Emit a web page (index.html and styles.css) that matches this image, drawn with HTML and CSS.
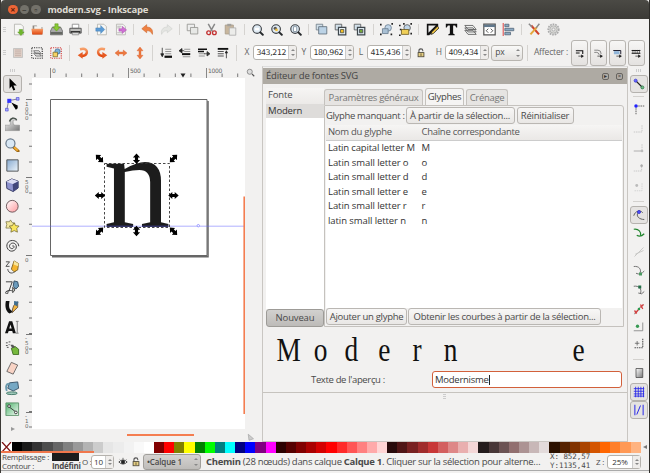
FILE: index.html
```html
<!DOCTYPE html>
<html lang="fr">
<head>
<meta charset="utf-8">
<title>modern.svg - Inkscape</title>
<link rel="stylesheet" href="styles.css">
</head>
<body>
<svg class="defs" width="0" height="0">
  <defs>
    <linearGradient id="blue" x1="0" y1="0" x2="1" y2="1"><stop offset="0" stop-color="#86a9cf"/><stop offset="1" stop-color="#eef5fb"/></linearGradient>
    <linearGradient id="orange" x1="0" y1="0" x2="0" y2="1"><stop offset="0" stop-color="#f7a06a"/><stop offset="1" stop-color="#e2470f"/></linearGradient>
    <linearGradient id="pink" x1="0" y1="0" x2="1" y2="1"><stop offset="0" stop-color="#fff"/><stop offset="1" stop-color="#ff9a9f"/></linearGradient>
    <linearGradient id="green" x1="0" y1="0" x2="1" y2="1"><stop offset="0" stop-color="#4fb36c"/><stop offset="1" stop-color="#f2faf4"/></linearGradient>
    <linearGradient id="grey" x1="0" y1="0" x2="1" y2="1"><stop offset="0" stop-color="#fff"/><stop offset="1" stop-color="#777"/></linearGradient>
    <symbol id="lens" viewBox="0 0 16 16"><circle cx="7.500" cy="7.500" r="5.300" fill="#dfeaf3" stroke="#3c4045" stroke-width="1.400"/><path d="M11.500 11.500l3 3" stroke="#25282b" stroke-width="2.400" stroke-linecap="round"/></symbol>
    <symbol id="rot" viewBox="0 0 16 16"><path d="M4 3c7-2 10 1 9 5-1 3-3 4-7 4" fill="none" stroke="url(#orange)" stroke-width="3.200"/><path d="M7.500 6.500v9L1 11z" fill="#e65a22"/></symbol>
    <symbol id="harrow" viewBox="0 0 16 16"><path d="M0 8l5-4v2.700h6V4l5 4-5 4V9.300H5V12z" fill="#ec7a42" stroke="#d9571f" stroke-width=".5"/></symbol>
    <symbol id="lock" viewBox="0 0 12 12"><path d="M3.500 6V3.500a2.300 2.300 0 0 1 4.700-.2V4" fill="none" stroke="#555" stroke-width="1.300"/><rect x="2.500" y="5.500" width="7" height="5" fill="#e5cf84" stroke="#4b4638"/><path d="M6 6.500v3" stroke="#54472a"/></symbol>
    <symbol id="resize" viewBox="-6 -6 12 12"><path d="M-5.200 0l4-3.600v2h2.400v-2l4 3.600-4 3.600v-2h-2.400v2z" fill="#000"/></symbol>
    <symbol id="sheet" viewBox="0 0 16 16"><path d="M3 1.500h8l3 3v10H3z" fill="#f7f7f5" stroke="#b2b1ad"/></symbol>
  </defs>
</svg>

<div class="window">
  <header class="titlebar">
    <span class="wbtn close">×</span><span class="wbtn">–</span><span class="wbtn">▫</span>
    <h1>modern.svg - Inkscape</h1>
  </header>

  <div class="commands">
    <i class="grip"></i>
    <svg viewBox="0 0 16 16"><use href="#sheet"/><path d="M9 8h4v3h2l-4 4.500L7 11h2z" fill="#6fb52c" stroke="#4b8d16" stroke-width=".5"/></svg>
    <svg viewBox="0 0 16 16"><path d="M2 3h5l1 2h6v9H2z" fill="#8d8780"/><path d="M4 4h9v6H4z" fill="#f4f4f2"/><path d="M.5 7h14.500l-1 7H1.500z" fill="url(#orange)"/></svg>
    <svg viewBox="0 0 16 16"><path d="M3 5h10l2.500 5v4.500H.5V10z" fill="#aaa" stroke="#686868"/><path d="M1 11h14v3H1z" fill="#656762"/><path d="M6 1h4v4h2.500L8 10 3.500 5H6z" fill="#8aca35" stroke="#568b16" stroke-width=".6"/></svg>
    <svg viewBox="0 0 16 16"><path d="M4 1.500h8v5H4z" fill="#fff" stroke="#888"/><path d="M1 6.500h14v6H1z" fill="#bdbdbb" stroke="#444"/><path d="M2 10h12v2H2z" fill="#222"/><path d="M4 12h8v2.500H4z" fill="#eee" stroke="#888"/></svg>
    <i class="sep"></i>
    <svg viewBox="0 0 16 16"><use href="#sheet"/><path d="M1 6h6V3l5 5-5 5v-3H1z" fill="#5b9bd5" stroke="#3c76ae" stroke-width=".5"/></svg>
    <svg viewBox="0 0 16 16"><use href="#sheet"/><path d="M4 4h5M4 6h4M4 12h6" stroke="#aaa"/><path d="M6 7h4V4l5.500 4.500L10 13v-3H6z" fill="#cf6fd4" stroke="#9b459f" stroke-width=".5"/></svg>
    <i class="sep"></i>
    <svg viewBox="0 0 16 16"><path d="M1 7l6-5v3c6 0 8 4 7 9-2-4-4-4.500-7-4.500V12z" fill="#ef8142" stroke="#c9642b" stroke-width=".7"/></svg>
    <svg viewBox="0 0 16 16"><path d="M15 7L9 2v3C3 5 1 9 2 14c2-4 4-4.500 7-4.500V12z" fill="#e4e5e2" stroke="#ccceca" stroke-width=".7"/></svg>
    <i class="sep"></i>
    <svg viewBox="0 0 16 16"><path d="M1.500 1.500h9v8h-9z" fill="#eee" stroke="#92928f"/><path d="M5.500 5.500h9v8h-9z" fill="#e7e8e6" stroke="#92928f"/></svg>
    <svg viewBox="0 0 16 16"><path d="M4 1l5 9M12 1L7 10" stroke="#888" stroke-width="1.800"/><circle cx="4.500" cy="12" r="2.300" fill="none" stroke="#c33232" stroke-width="1.700"/><circle cx="11.500" cy="12" r="2.300" fill="none" stroke="#c33232" stroke-width="1.700"/></svg>
    <svg viewBox="0 0 16 16"><path d="M1.500 2.500h10v11h-10z" fill="#c8b69d" stroke="#a89c8a"/><path d="M4 1h5v3H4z" fill="#a3a19c"/><path d="M6.500 6h8v9h-8z" fill="#ececea" stroke="#aaa"/></svg>
    <i class="sep"></i>
    <svg viewBox="0 0 16 16"><use href="#lens"/><path d="M5 7.500h5" stroke="#fff" stroke-width="3"/></svg>
    <svg viewBox="0 0 16 16"><use href="#lens"/><circle cx="6.500" cy="6.500" r="2" fill="#555"/><path d="M6.500 7h3v3h-3z" fill="#f4c23c"/></svg>
    <svg viewBox="0 0 16 16"><use href="#lens"/><path d="M5.500 4.500h4v6h-4z" fill="#fff" stroke="#7a8b9a"/></svg>
    <i class="sep"></i>
    <svg viewBox="0 0 16 16"><path d="M1.500 1.500h8v7h-8z" fill="#d2e0ea" stroke="#6f7c86"/><path d="M4.500 4.500h10v9h-10z" fill="#bcd3e6" stroke="#5c6b78"/></svg>
    <svg viewBox="0 0 16 16"><path d="M1.500 1.500h8v7h-8z" fill="#d2e0ea" stroke="#555"/><path d="M5.500 5.500h9v9h-9z" fill="#e8f0f5" stroke="#3e464c" stroke-width="1.500"/><path d="M8 8h4v4H8z" fill="#f5c025" stroke="#554"/></svg>
    <svg viewBox="0 0 16 16"><path d="M1.500 1.500h8v7h-8z" fill="#d2e0ea" stroke="#555"/><path d="M5.500 5.500h9v9h-9z" fill="#dce9ef" stroke="#3e464c" stroke-width="1.500"/><path d="M8 8h4v4H8z" fill="#74a838" stroke="#445"/></svg>
    <i class="sep"></i>
    <svg viewBox="0 0 16 16"><circle cx="10" cy="6" r="4" fill="#c0d5e8" stroke="#697c8f"/><path d="M3 7h7v6H3z" fill="#a9c0d4" stroke="#697c8f"/><path d="M0 1h2v2H0zM14 0h2v2h-2zM0 13h2v2H0zM13 13h2v2h-2z" fill="#222"/></svg>
    <svg viewBox="0 0 16 16"><circle cx="10" cy="6" r="4" fill="#c0d5e8" stroke="#555"/><path d="M3 8h9v6H3z" fill="#f0cf57" stroke="#6b5920"/><path d="M0 2h2v2H0zM5 0h2v2H5zM14 0h2v2h-2zM0 14h2v2H0zM14 12h2v2h-2zM1 7h2v2H1z" fill="#222"/></svg>
    <i class="sep"></i>
    <svg viewBox="0 0 16 16"><path d="M1 1h14v4L4 15H1z" fill="#111"/><path d="M3 3h9L3 12z" fill="#eee"/><path d="M14 4l2 2-7 7-3 1 1-3z" fill="#efc544" stroke="#222"/></svg>
    <svg viewBox="0 0 16 16"><path d="M1 1h14v4.500h-1.200L12.500 3H10v10l2 1v1H4v-1l2-1V3H3.500L2.200 5.500H1z" fill="#111"/></svg>
    <svg viewBox="0 0 16 16"><path d="M1 9h10l4 5H5zM1 6h10l4 5H5zM1 3h10l4 5H5z" fill="#f2f3f2" stroke="#555"/></svg>
    <svg viewBox="0 0 16 16"><path d="M1 1.500h14v13H1z" fill="#fff" stroke="#555" stroke-width="1.500"/><path d="M1 2h14v3H1z" fill="#61788c"/><path d="M6.500 7L4 9.500 6.500 12M9.500 7L12 9.500 9.500 12" fill="none" stroke="#333"/></svg>
    <svg viewBox="0 0 16 16"><path d="M1.500 0v16" stroke="#e15959" stroke-width="1.400"/><path d="M3.500 1.500h5v3h-5zM3.500 6.500h11v3h-11zM3.500 11.500h7v3h-7z" fill="#8ba9c2" stroke="#55687a"/></svg>
    <i class="sep"></i>
    <svg viewBox="0 0 16 16"><path d="M4 3l9.500 11" stroke="#cf432b" stroke-width="2.600"/><path d="M11 5L3 14" stroke="#e4a73c" stroke-width="2.400"/><path d="M1 1l4 4M10 6l4-5" stroke="#888" stroke-width="1.800"/></svg>
    <svg viewBox="0 0 16 16"><circle cx="8" cy="8" r="6.500" fill="#ddd" stroke="#aaa" stroke-width="2" stroke-dasharray="2 1.200"/><circle cx="8" cy="8" r="4.500" fill="#d8d8d6" stroke="#b0b0ae"/><circle cx="8" cy="8" r="1.800" fill="#f2f1f0" stroke="#aaa"/></svg>
  </div>

  <div class="options">
    <i class="grip"></i>
    <svg viewBox="0 0 16 16"><path d="M2 2h12v12H2z" fill="#dfd0c8" stroke="#bbb"/><path d="M4 4h8M4 6.500h8M4 9h8M4 11.500h8" stroke="#c0aaa0"/></svg>
    <svg viewBox="0 0 16 16"><path d="M1 1h14v14H1z" fill="none" stroke="#333" stroke-width="1.500" stroke-dasharray="1.500 1.500"/><path d="M3.500 8h7l3 4h-7zM3.500 5h7l3 4h-7z" fill="#eee" stroke="#555"/></svg>
    <svg viewBox="0 0 16 16"><path d="M1 1h14v14H1z" fill="none" stroke="#d23b3b" stroke-width="1.500" stroke-dasharray="1.500 1.500"/><circle cx="10" cy="6" r="3.500" fill="#7cb3dc" stroke="#3b6b96"/><path d="M4 7h6v6H4z" fill="#f6d264" stroke="#7c6b2f"/></svg>
    <i class="sep"></i>
    <svg viewBox="0 0 16 16"><use href="#rot"/></svg>
    <svg viewBox="0 0 16 16"><use href="#rot" transform="matrix(-1 0 0 1 16 0)"/></svg>
    <svg viewBox="0 0 16 16"><use href="#harrow"/></svg>
    <svg viewBox="0 0 16 16"><use href="#harrow" transform="rotate(90 8 8)"/></svg>
    <i class="sep"></i>
    <svg viewBox="0 0 16 16"><path d="M3 1v10M1 9h4l-2 4z" stroke="#222" fill="#222"/><path d="M7 3h8M7 6h8M7 9h8" stroke="#777"/><path d="M6 13h10" stroke="#111" stroke-width="3"/></svg>
    <svg viewBox="0 0 16 16"><path d="M7 3h8M7 6h8M5 13h10" stroke="#777"/><path d="M4 9.500h11" stroke="#111" stroke-width="2.600"/><path d="M1 5h6M4 2L0 5l4 3z" stroke="#222" fill="#222"/></svg>
    <svg viewBox="0 0 16 16"><path d="M1 9h8M1 12h8" stroke="#777"/><path d="M0 3h12M0 6h8" stroke="#111" stroke-width="2.200"/><path d="M8 9h5M12 6l4 3-4 3z" stroke="#333" fill="#333"/></svg>
    <svg viewBox="0 0 16 16"><path d="M1 2.500h14" stroke="#111" stroke-width="2.500"/><path d="M1 6h8M1 9h8M1 12h8" stroke="#555" stroke-width="1.500"/><path d="M12.500 15V7M11 8h3l-1.500-3z" stroke="#222" fill="#222"/></svg>
    <i class="sep"></i>
    <label class="axis">X</label><span class="spin"><b>343,212</b><i></i></span>
    <label class="axis">Y</label><span class="spin"><b>180,962</b><i></i></span>
    <label class="axis">L</label><span class="spin"><b>415,436</b><i></i></span>
    <svg class="lock" viewBox="0 0 12 12"><use href="#lock"/></svg>
    <label class="axis">H</label><span class="spin"><b>409,434</b><i></i></span>
    <span class="unit">px<i></i></span>
    <i class="sep"></i>
    <label class="affect">Affecter :</label>
    <span class="toggle"><svg viewBox="0 0 16 16"><path d="M3 4.500h11v5M3 8h6" fill="none" stroke="#111" stroke-width="1.700"/><path d="M7 13h5M12 11l3 2-3 2z" fill="#111" stroke="#111"/></svg></span>
    <span class="toggle"><svg viewBox="0 0 16 16"><path d="M2 3.500h6q5 0 5 6M2 7h4q3 0 4 4" fill="none" stroke="#666" stroke-width="1.200"/><path d="M7 13h5M12 11l3 2-3 2z" fill="#111" stroke="#111"/></svg></span>
    <span class="toggle"><svg viewBox="0 0 16 16"><path d="M3 5h9v5H3z" fill="#8fb4d8"/><path d="M2 4h12v6" fill="none" stroke="#223" stroke-width="1.600"/><path d="M7 13h5M12 11l3 2-3 2z" fill="#111" stroke="#111"/></svg></span>
    <span class="toggle"><svg viewBox="0 0 16 16"><path d="M1 4h14M1 8.500h14" stroke="#111" stroke-width="1.700"/><path d="M3 3v6M6.500 3v6M10 3v6M13.500 3v6" stroke="#333"/><path d="M7 13h5M12 11l3 2-3 2z" fill="#111" stroke="#111"/></svg></span>
  </div>

  <main class="work">
    <nav class="tools">
      <i class="grip wide"></i>
      <span class="tool on"><svg viewBox="0 0 16 16"><path d="M5 1.500l8 8H9.300l2 4.500-2 1-2.200-4.700L5 13z" fill="#000"/></svg></span>
      <span class="tool"><svg viewBox="0 0 16 16"><path d="M2 14L4 4l11-2" fill="none" stroke="#557" stroke-width=".8"/><path d="M2.500 2h4.500v4.500H2.500z" fill="#33f"/><path d="M.5 12.500h3v3h-3zM12.500 .5h3v3h-3z" fill="#aaf" stroke="#33c" stroke-width=".6"/><path d="M7 6l7 3.500v3L12 14z" fill="#000"/></svg></span>
      <span class="tool"><svg viewBox="0 0 16 16"><path d="M0 9h5c2-1 0-4 1-6 2-3 6-2 7 1-2-1-4-1-4 1s0 4 2 4h5v6H0z" fill="url(#grey)" stroke="#666" stroke-width=".4"/><path d="M5 5c1-4 5-5 8-2" fill="none" stroke="#455049" stroke-width="1.600"/></svg></span>
      <span class="tool"><svg viewBox="0 0 16 16"><path d="M9.500 10l5 4.500" stroke="#9c6715" stroke-width="3.200" stroke-linecap="round"/><path d="M10 10l4 4" stroke="#f6ae32" stroke-width="2"/><circle cx="6" cy="6" r="5" fill="#d9e8f5" stroke="#667789" stroke-width="1.300"/></svg></span>
      <span class="tool"><svg viewBox="0 0 16 16"><path d="M2 2h12.500v12.500H2z" fill="url(#blue)" stroke="#4b4d50"/></svg></span>
      <span class="tool"><svg viewBox="0 0 16 16"><path d="M1.500 4l6-3 7 2.500v7.500L9 15 2 11.500z" fill="#8f94cf" stroke="#30345f"/><path d="M8.500 6.500l6-3v7.500L9 15z" fill="#42477c"/><path d="M1.500 4l7 2.500 6-3-7-2.500z" fill="#dcdef4"/></svg></span>
      <span class="tool"><svg viewBox="0 0 16 16"><circle cx="8" cy="8" r="6.500" fill="url(#pink)" stroke="#665255"/></svg></span>
      <span class="tool"><svg viewBox="0 0 16 16"><path d="M6 1l2 3 3 1-2 3 0 3-4-1-4 0 1-4-1-3 4 0z" fill="#f2e8a0" stroke="#77703d" stroke-width=".8"/><path d="M10 4l1.700 3.300 3.800.5-2.500 2.700.7 4-3.500-1.700-3.700 1.700.7-4-2.500-2.700 3.500-.5z" fill="#f9e65d" stroke="#6d6431" stroke-width=".8"/></svg></span>
      <span class="tool"><svg viewBox="0 0 16 16"><path d="M8 8c1-1.500 2.500 0 1.700 1.500C8 12 4.500 10 5 7.500 5.800 3.700 11 3.500 12.300 7 13.700 12 8 15 4.500 12.500.5 9.500 1.500 3 6.500 1.800 11 .8 15 4 15.200 8" fill="none" stroke="#3d3d3d" stroke-width="1.100"/></svg></span>
      <span class="tool"><svg viewBox="0 0 16 16"><path d="M1 2h4L1 7h4M3 10c1 6 6 5 9 2" fill="none" stroke="#444"/><path d="M10 1l5 3-1 7-4 2-3-3z" fill="#f5b52f" stroke="#7e6427"/><path d="M10 1l5 3-.5 3-5-2z" fill="#f9e79a"/></svg></span>
      <span class="tool"><svg viewBox="0 0 16 16"><path d="M1 2h7L4 13M1 13c5-4 8 2 10-4" fill="none" stroke="#444" stroke-width="1.100"/><circle cx="2" cy="14" r="1.300" fill="#fff" stroke="#333"/><path d="M10 1l4 1 1 5-3 3-3-3z" fill="#6a9abb" stroke="#30495f"/><path d="M8.500 8l2.500 3-2.500 3z" fill="#d7d8cf" stroke="#444"/></svg></span>
      <span class="tool"><svg viewBox="0 0 16 16"><path d="M1 1h4c-1 6-1 9 4 12l-4 2C0 12 0 5 1 1z" fill="#111"/><path d="M14 2c-4 2-6 6-6 12l6-6z" fill="#f1b440" stroke="#654"/><path d="M10 1l5 1-2 5-3-2z" fill="#406f91"/></svg></span>
      <span class="tool"><svg viewBox="0 0 16 16"><path d="M4.500 1.500h3.500L12 14.500H8.700L8 12H4l-.8 2.500H0zM6 5l-1.300 4.500h2.700z" fill="#111" fill-rule="evenodd"/><path d="M12 1.500h3M12 14.500h3M13.500 2v12" stroke="#555" stroke-width=".8"/></svg></span>
      <span class="tool"><svg viewBox="0 0 16 16"><path d="M7 8l4-2 4 3v6H9z" fill="#76b83c" stroke="#3d6c20"/><path d="M6 4l3 0 2 3-3 1z" fill="#555"/><path d="M1 2h2M4 1h2M1 5h2M4 4h1M2 7h2" stroke="#444"/></svg></span>
      <span class="tool"><svg viewBox="0 0 16 16"><path d="M7 1.500l7 3-5 10-7-3z" fill="#f8d3c5" stroke="#555" stroke-width=".9"/></svg></span>
      <span class="tool"><svg viewBox="0 0 16 16"><path d="M5 2l9-1 1 7-6 3-6-3z" fill="#76a8c4" stroke="#355166"/><path d="M5 3C0 3 1 8 2 11" fill="none" stroke="#6b9aae" stroke-width="2"/><ellipse cx="7.500" cy="13.500" rx="6" ry="1.500" fill="#a1cabb" stroke="#3f7566"/></svg></span>
      <span class="tool"><svg viewBox="0 0 16 16"><path d="M1 1h14v14H1z" fill="url(#green)" stroke="#5d936b"/><path d="M4 5l8 6" stroke="#333"/><circle cx="4.500" cy="4.500" r="1.500" fill="#fff" stroke="#333"/><circle cx="12" cy="11.500" r="1.500" fill="#fff" stroke="#333"/></svg></span>
      <i class="more"></i>
    </nav>

    <section class="editor">
      <svg class="hruler" width="221" height="12" viewBox="24 66 221 12">
        <path d="M34.400 75.200H245" stroke="#777" stroke-width="3.600" stroke-dasharray="1 14.600"/>
        <path d="M50.500 68v10M128.500 68v10M206.500 68v10" stroke="#888"/>
        <path d="M180.500 73.500h5l-2.500 4z" fill="#222"/>
        <text x="52" y="72.600">0</text><text x="130" y="72.600">500</text><text x="208" y="72.600">1000</text>
      </svg>
      <svg class="vruler" width="8" height="351" viewBox="24 78 8 351">
        <path d="M30.500 83.400V428" stroke="#777" stroke-width="3" stroke-dasharray="1 14.600"/>
        <path d="M26 99.500h6M26 177.500h6M26 255.500h6M26 334.500h6M26 412.500h6" stroke="#777"/>
        <g><text x="25" y="106">1</text><text x="25" y="110.500">0</text><text x="25" y="115">0</text><text x="25" y="119.500">0</text>
        <text x="25" y="184">5</text><text x="25" y="188.500">0</text><text x="25" y="193">0</text><text x="25" y="262">0</text>
        <text x="25" y="340">-</text><text x="25" y="345">5</text><text x="25" y="349.500">0</text><text x="25" y="354">0</text>
        <text x="25" y="418">-</text><text x="25" y="423">1</text><text x="25" y="427.500">0</text></g>
      </svg>
      <svg class="canvas" width="213" height="351" viewBox="32 78 213 351">
        <path d="M52 256.700h156V101" fill="none" stroke="#666" stroke-width="1.500"/>
        <path d="M50.500 99.500h156.500v156h-156.500z" fill="#fff" stroke="#666"/>
        <text class="letter" x="103.500" y="227" textLength="67" lengthAdjust="spacingAndGlyphs">n</text>
        <path d="M32 226.200h213" stroke="#6464ff" stroke-opacity=".5"/>
        <circle cx="198.300" cy="225.700" r="1.200" fill="#fff" stroke="#8585ff" stroke-width=".8"/>
        <path d="M104.500 163.500h65v64h-65z" fill="none" stroke="#333" stroke-width=".9" stroke-dasharray="2.500 2"/>
        <g>
          <use href="#resize" x="93.500" y="152.500" width="12" height="12" transform="rotate(45 99.500 158.500)"/>
          <use href="#resize" x="130.500" y="152.800" width="12" height="12" transform="rotate(90 136.500 158.800)"/>
          <use href="#resize" x="167.500" y="152.500" width="12" height="12" transform="rotate(-45 173.500 158.500)"/>
          <use href="#resize" x="94" y="189.500" width="12" height="12"/>
          <use href="#resize" x="167.500" y="189.500" width="12" height="12"/>
          <use href="#resize" x="93.500" y="225.300" width="12" height="12" transform="rotate(-45 99.500 231.300)"/>
          <use href="#resize" x="130.500" y="225" width="12" height="12" transform="rotate(90 136.500 231)"/>
          <use href="#resize" x="167.500" y="225.300" width="12" height="12" transform="rotate(45 173.500 231.300)"/>
        </g>
        <path d="M244.300 196.500V414" stroke="#f47d50" stroke-width="1.800"/>
      </svg>
      <div class="vside">
        <svg viewBox="0 0 12 12"><circle cx="5" cy="5" r="3.400" fill="#ddd" stroke="#777"/><path d="M8 8l3 3" stroke="#555" stroke-width="1.500"/></svg>
        <svg viewBox="0 0 12 12"><path d="M3 3l7 6-6 2z" fill="#ccc" stroke="#aaa"/></svg>
      </div>
      <div class="hscroll"><i></i></div>
    </section>
    <div class="split"></div>

    <aside class="dock">
      <div class="dialog">
        <div class="dtitle"><h2>Éditeur de fontes SVG</h2><span>▸</span><span>×</span></div>
        <div class="fontpane">
          <div class="fonts">
            <div class="colhead">Fonte</div>
            <div class="picked">Modern</div>
            <div class="blank"></div>
            <span class="newbtn">Nouveau</span>
          </div>
          <div class="book">
            <div class="tabs"><span class="tab t1">Paramètres généraux</span><span class="tab t2 active">Glyphes</span><span class="tab t3">Crénage</span></div>
            <div class="page">
              <div class="missing"><label>Glyphe manquant :</label><span class="btn b1">À partir de la sélection...</span><span class="btn b2">Réinitialiser</span></div>
              <div class="glyphs">
                <div class="row head"><span>Nom du glyphe</span><span>Chaîne correspondante</span></div>
                <div class="row cap"><span>Latin capital letter M</span><span>M</span></div>
                <div class="row"><span>Latin small letter o</span><span>o</span></div>
                <div class="row"><span>Latin small letter d</span><span>d</span></div>
                <div class="row"><span>Latin small letter e</span><span>e</span></div>
                <div class="row"><span>Latin small letter r</span><span>r</span></div>
                <div class="row"><span>latin small letter n</span><span>n</span></div>
              </div>
              <div class="acts"><span class="btn b3">Ajouter un glyphe</span><span class="btn b4">Obtenir les courbes à partir de la sélection...</span></div>
            </div>
          </div>
        </div>
        <svg class="preview" width="362" height="44" viewBox="264 327 362 44"><g transform="translate(277.500 360.700) scale(.83 1)"><text x="0 45 82 122.500 164 201.500 356.500" y="0">Moderne</text></g></svg>
        <div class="sample"><label>Texte de l'aperçu :</label><span class="entry">Modernisme</span></div>
      </div>
      <i class="grip dockgrip"></i>
    </aside>

    <nav class="snap">
      <i class="grip wide"></i>
      <span class="sbtn on"><svg viewBox="0 0 16 16"><path d="M4 4l8 8" stroke="#222" stroke-width="1.500"/><circle cx="3.500" cy="3.500" r="2" fill="#66f" stroke="#33c"/><circle cx="12.500" cy="12.500" r="2" fill="#7b8" stroke="#274"/></svg></span>
      <i class="hsep first"></i>
      <span class="sbtn s1"><svg viewBox="0 0 16 16"><path d="M4 4h11M4 4v11" stroke="#333" stroke-dasharray="2 1"/><circle cx="4" cy="4" r="2.300" fill="#22f"/></svg></span>
      <span class="sbtn s2"><svg viewBox="0 0 16 16"><path d="M12 3v9H1" fill="none" stroke="#bbb" stroke-dasharray="2 1"/></svg></span>
      <span class="sbtn s2"><svg viewBox="0 0 16 16"><path d="M12 3v9" stroke="#bbb" stroke-dasharray="2 1"/><path d="M1 12h11" stroke="#999"/><circle cx="12" cy="12" r="1.800" fill="#bbb"/></svg></span>
      <span class="sbtn s3"><svg viewBox="0 0 16 16"><path d="M11.500 3v9H1" fill="none" stroke="#bbb" stroke-dasharray="2 1"/><circle cx="11.500" cy="5" r="1.800" fill="#aaa"/></svg></span>
      <span class="sbtn s3"><svg viewBox="0 0 16 16"><path d="M12 3v10H1" fill="none" stroke="#ccc" stroke-dasharray="2 1"/><circle cx="5" cy="6" r="1.900" fill="#bbb"/></svg></span>
      <i class="hsep second"></i>
      <span class="sbtn on"><svg viewBox="0 0 16 16"><path d="M1 9C3 2 10 1 13 5M7 4c-4 6 2 10 8 10" fill="none" stroke="#555" stroke-width="1.200"/><circle cx="8" cy="4" r="2" fill="#55f" stroke="#22c"/></svg></span>
      <span class="sbtn s4"><svg viewBox="0 0 16 16"><path d="M1 3c7-1 10 4 9 8M5 11q5 3 10-2" fill="none" stroke="#23862f" stroke-width="1.500"/></svg></span>
      <span class="sbtn s4"><svg viewBox="0 0 16 16"><path d="M2 14L14 2M3 11l11-5" stroke="#c4c4c2" stroke-width="1.200"/></svg></span>
      <span class="sbtn s4"><svg viewBox="0 0 16 16"><path d="M1 2c7-1 11 4 8 10M4 11q6 3 11-3" fill="none" stroke="#666" stroke-width="1.200"/><path d="M8 10h4v4H8z" fill="#4a9a61"/></svg></span>
      <span class="sbtn s4"><svg viewBox="0 0 16 16"><path d="M1 3c7-1 11 3 9 10M7 12q5 3 8-2" fill="none" stroke="#666" stroke-width="1.200"/><path d="M7 2h4v4H7z" fill="#226f47"/></svg></span>
      <span class="sbtn s4"><svg viewBox="0 0 16 16"><path d="M2 15c0-4 4-3 6-7s2-3 6-6" fill="none" stroke="#777"/><path d="M2 10l3 4M3 14l4-5M10 6l4-4M10 2l3 6" stroke="#d33f3f" stroke-width="1.700"/><circle cx="8" cy="8" r="1.700" fill="#2b9c51"/></svg></span>
      <span class="sbtn s5"><svg viewBox="0 0 16 16"><path d="M13 2v11H1" fill="none" stroke="#777"/><circle cx="6" cy="7" r="2.200" fill="#379a53"/></svg></span>
      <span class="sbtn s5"><svg viewBox="0 0 16 16"><path d="M13 1v12H1" fill="none" stroke="#555" stroke-width="1.500" stroke-dasharray="2 1"/><path d="M2.500 7h6M5.500 4v6" stroke="#555"/></svg></span>
      <i class="hsep last"></i>
      <span class="sbtn s6"><svg viewBox="0 0 16 16"><path d="M4 2h9v12H4z" fill="url(#grey)" stroke="#444"/></svg></span>
      <span class="sbtn on"><svg viewBox="0 0 16 16"><path d="M3.500 1v14M7 1v14M10.500 1v14M14 1v14M1 3.500h14M1 7h14M1 10.500h14M1 13.500h14" stroke="#2222e8" stroke-width="1.100"/></svg></span>
      <span class="sbtn on"><svg viewBox="0 0 16 16"><path d="M2.500 1v14M5 14l5-12M13.500 1v14" stroke="#2222e8" stroke-width="1.300"/></svg></span>
    </nav>
  </main>

  <div class="palette">
    <svg class="none" width="11" height="10" viewBox="0 0 11 10"><path d="M0 0h11v10H0z" fill="#fff"/><path d="M1 0l9 10M10 0L1 10" stroke="#7e1515" stroke-width="1.300"/></svg>
    <div class="swatches" id="swatches"></div>
    <i class="back"></i>
  </div>

  <footer class="status">
    <div class="fill"><span>Remplissage :</span><i></i><span>Contour :</span><b>Indéfini</b></div>
    <label class="op">O :</label><span class="opacity"><span>10</span><i></i></span>
    <svg class="eye" viewBox="0 0 12 12"><path d="M1 6q5-5 10 0-5 5-10 0z" fill="#fff" stroke="#333"/><circle cx="6" cy="6" r="2.400" fill="#222"/><path d="M2 3l1 1M6 1v2M10 3L9 4" stroke="#555"/></svg>
    <svg class="eye" viewBox="0 0 12 12"><use href="#lock"/></svg>
    <span class="layer">•Calque 1<i></i></span>
    <p class="msg"><b>Chemin</b> (28 nœuds) dans calque <b>Calque 1</b>. Cliquer sur la sélection pour alterne…</p>
    <div class="coords"><span>X: 852,57</span><span>Y:1135,41</span></div>
    <label class="zl">Z :</label><span class="zoom"><span>25%</span><i></i></span>
  </footer>
</div>
<script src="palette.js"></script>
</body>
</html>
```
FILE: palette.js
```js
const colors = (
  "000 1a1a1a 333 4d4d4d 666 808080 999 b3b3b3 ccc e6e6e6 ececec f2f2f2 f9f9f9 fff " +
  "800000 f00 808000 ff0 008000 0f0 008080 0ff 000080 00f 800080 f0f " +
  "2b0000 500 800000 a00 d40000 f00 ff2a2a f55 ff8080 faa ffd5d5 " +
  "280b0b 501616 782121 a02c2c c83737 d35f5f de8787 e9afaf f4d7d7 " +
  "241c1c 483737 6c5353 916f6f ac9393 c8b7b7 e3dbdb " +
  "2b1100 520 803300 a40 d45500 f60 ff7f2a f95 ffb380"
).split(" ");
const box = document.getElementById("swatches");
for (const c of colors) {
  const s = document.createElement("i");
  s.style.background = "#" + c;
  box.append(s);
}
```
FILE: styles.css
```css
* { box-sizing: border-box; }
body { margin: 0; background: #f2f1f0; font: 9.5px/1 "Open Sans", "Noto Sans", sans-serif; letter-spacing: -.15px; color: #4a4a4a; overflow: hidden; }
h1, h2, p { margin: 0; }
i { font-style: normal; display: block; flex: none; }
svg { display: block; flex: none; }
span, label { white-space: nowrap; }
.defs { position: absolute; }
.window { width: 650px; height: 473px; border-left: 1px solid #3b3935; border-right: 1px solid #2d2c29; background: #f2f1f0; display: flex; flex-direction: column; }

.titlebar { height: 19px; background: linear-gradient(#4b4a45, #3b3a36); display: flex; align-items: center; padding-left: 7px; gap: 2px; border-radius: 4px 4px 0 0; }
.wbtn { width: 9.500px; height: 9.500px; border-radius: 50%; background: #73716a; color: #33322e; font-size: 9px; line-height: 9px; text-align: center; letter-spacing: 0; }
.wbtn.close { background: #ed6536; color: #5c200b; font-weight: bold; }
h1 { font-size: 9.500px; letter-spacing: -.25px; color: #dfdbd2; margin-left: 5px; white-space: nowrap; }

.commands, .options { display: flex; align-items: center; }
.commands { height: 20px; padding-left: 2px; }
.commands > svg { width: 13px; height: 13px; margin: 0 3px; }
.options { height: 27px; padding-left: 2px; }
.options > svg { width: 12px; height: 12px; margin: 0 3.500px; }
.grip { width: 3px; height: 5px; margin-right: 2.500px; background: repeating-linear-gradient(#ccc 0 1px, transparent 1px 2px); }
.grip.wide { width: 5px; height: 3px; margin: 3px auto; background: repeating-linear-gradient(90deg, #ccc 0 1px, transparent 1px 2px); }
.sep { width: 1px; height: 11px; background: #d5d3d0; margin: 0 3.300px; }
.options .sep { height: 16px; }
.axis { width: 13px; font-size: 8.500px; text-align: center; color: #666; }
.spin { width: 44px; height: 15px; border: 1px solid #b5b2ad; border-radius: 3px; background: #fff; display: flex; overflow: hidden; align-items: center; }
.spin b { flex: 1; font: 7.800px "DejaVu Sans"; letter-spacing: -.35px; text-align: center; color: #333; }
.spin i, .opacity i, .zoom i { width: 8px; height: 100%; background: #efedeb; border-left: 1px solid #ccc; position: relative; }
.spin i::before, .opacity i::before, .zoom i::before, .unit i::before, .layer i::before { content: ""; position: absolute; top: 3px; left: 1.500px; border: 2px solid transparent; border-top: 0; border-bottom: 2.500px solid #888; }
.spin i::after, .opacity i::after, .zoom i::after, .unit i::after, .layer i::after { content: ""; position: absolute; bottom: 3px; left: 1.500px; border: 2px solid transparent; border-bottom: 0; border-top: 2.500px solid #888; }
.options > .lock { width: 10px; height: 10px; margin: 0 6px 0 5px; }
.unit { width: 32px; height: 16px; margin-left: 2px; border: 1px solid #b8b5b0; border-radius: 3px; background: linear-gradient(#f9f9f8, #e3e1df); display: flex; align-items: center; padding-left: 3px; font-size: 8.500px; }
.unit i, .layer i { width: 8px; height: 100%; position: relative; margin-left: auto; }
.affect { width: 40px; padding-left: 3px; font-size: 8.500px; color: #666; }
.toggle { width: 17px; height: 26px; margin-right: 2px; border: 1px solid #b8b5b1; border-radius: 3px; background: linear-gradient(#f7f6f5, #e4e2e0); display: grid; place-items: center; }
.toggle svg { width: 10px; height: 10px; }

.work { height: 376px; display: flex; }
.tools { width: 23px; }
.tool { width: 19px; height: 18.300px; margin: 0 auto 2px 2px; display: grid; place-items: center; border: 1px solid transparent; border-radius: 3px; }
.tool.on, .sbtn.on { border-color: #b5b2ae; background: #e5e3e1; }
.tool svg { width: 14.500px; height: 14.500px; }
.more { width: 0; border: 2.500px solid transparent; border-left: 4px solid #999; margin: 9px 0 0 10px; }
.editor { width: 237px; display: grid; grid-template: 12px 351px 13px / 8px 213px 16px; }
.hruler { grid-column: 1 / 3; }
.hruler text, .vruler text { font: 6px "DejaVu Sans"; letter-spacing: -.3px; fill: #666; }
.vruler text { font-size: 5.500px; }
.vruler { grid-area: 2 / 1; }
.canvas { grid-area: 2 / 2; background: #fff; }
.letter { font: 138px "Liberation Serif"; letter-spacing: 0; fill: #1c1c1c; }
.vside { grid-area: 1 / 3 / 4 / 4; display: flex; flex-direction: column; justify-content: space-between; padding: 2px 0 1px 1px; }
.vside svg { width: 9px; height: 9px; }
.hscroll { grid-area: 3 / 1 / 4 / 3; padding: 5px 0 0 103px; }
.hscroll i { width: 67px; height: 2px; background: #f47d50; }
.split { width: 1px; }

.dock { width: 366px; border: 1px solid #c9c6c2; border-top-color: #ddd; }
.dialog { height: 325px; border-bottom: 1px solid #c6c3be; }
.dtitle { height: 16px; margin-top: 1px; background: #aeaaa3; display: flex; align-items: center; padding: 0 4px 0 3px; gap: 7px; }
h2 { font-size: 9.500px; font-weight: 400; color: #444; flex: 1; letter-spacing: -.2px; }
.dtitle span { width: 7px; height: 7px; border: 1px solid #67645f; border-radius: 2px; font-size: 6px; line-height: 5px; text-align: center; color: #333; letter-spacing: 0; }
.fontpane { display: flex; height: 243px; padding: 4px 3px 0 3px; }
.fonts { width: 58px; display: flex; flex-direction: column; }
.colhead { height: 16px; padding: 2px; background: linear-gradient(#f6f5f4, #eceae8); }
.picked { height: 14px; padding: 2px; background: #dedcda; color: #333; }
.blank { flex: 1; background: #fff; }
.newbtn { height: 18px; border: 1px solid #9d9b97; border-radius: 3px; background: linear-gradient(#d2d1cf, #bdbbb8); display: grid; place-items: center; }
.book { flex: 1; display: flex; flex-direction: column; }
.tabs { height: 17px; display: flex; align-items: flex-end; gap: 2px; letter-spacing: -.3px; }
.tab { height: 16px; border: 1px solid #c5c2be; border-bottom: 0; border-radius: 3px 3px 0 0; background: #e6e4e2; color: #777; display: grid; place-items: center; }
.t1 { width: 99px; } .t2 { width: 39px; } .t3 { width: 42px; }
.tab.active { height: 17px; background: #f5f4f3; color: #444; }
.page { flex: 1; border: 1px solid #c5c2be; border-radius: 0 3px 0 0; padding: 0 1px; display: flex; flex-direction: column; }
.missing { height: 18.500px; display: flex; align-items: center; gap: 2px; letter-spacing: -.24px; }
.missing label { width: 77.500px; letter-spacing: -.35px; }
.btn { height: 17px; border: 1px solid #bab7b3; border-radius: 3px; background: linear-gradient(#f8f7f6, #e9e7e5); display: grid; place-items: center; }
.b1 { width: 109px; } .b2 { width: 57px; } .b3 { width: 81px; } .b4 { width: 193px; }
.glyphs { flex: 1; background: #fff; }
.row { height: 14.500px; display: grid; grid-template-columns: 93.500px 1fr; align-items: center; color: #333; padding-left: 2px; letter-spacing: -.08px; }
.row.cap { letter-spacing: -.17px; }
.row.head { height: 16px; background: linear-gradient(#f6f5f4, #eae8e6); border-bottom: 1px solid #ccc; color: #555; letter-spacing: -.28px; }
.acts { height: 18px; display: flex; gap: 1px; letter-spacing: -.28px; }
.preview text { font: 33px "Liberation Serif"; letter-spacing: 0; fill: #111; }
.sample { display: flex; align-items: center; padding: 0 3px 0 48px; height: 17px; }
.sample label { width: 121px; letter-spacing: -.35px; }
.entry { width: 190px; height: 17px; border: 1px solid #d2603b; border-radius: 3px; background: #fff; display: flex; align-items: center; padding-left: 2px; color: #333; letter-spacing: -.25px; }
.entry::after { content: ""; width: 1px; height: 10px; background: #222; }
.grip.dockgrip { margin: 1px 0 0 180px; }

.snap { width: 21px; display: flex; flex-direction: column; align-items: center; }
.snap .grip.wide { margin-bottom: 3px; }
.sbtn { width: 18px; height: 18px; display: grid; place-items: center; border: 1px solid transparent; border-radius: 3px; }
.sbtn svg { width: 12px; height: 12px; }
.hsep { width: 11px; height: 1px; background: #d3d1ce; margin: 4px 0 5px; }
.hsep.first { margin: 3px 0 2px; }
.hsep.second { margin: 5px 0 4px; }
.hsep.last { margin: 6px 0 4px; }
.s1 { height: 20px; } .s2 { height: 19.500px; } .s3 { height: 19px; } .s4 { height: 18.800px; } .s5 { height: 17.500px; } .s6 { height: 19px; }

.palette { height: 11px; display: flex; align-items: flex-start; position: relative; }
.palette::after { content: ""; position: absolute; left: 0; bottom: 0; width: 93px; height: 2px; background: #f0774c; }
.swatches { width: 629px; height: 11px; display: flex; }
.swatches i { flex: 1; }
.back { border: 2.500px solid transparent; border-right: 4px solid #777; border-left: 0; margin: 3px 0 0 2px; }

.status { height: 18px; display: flex; align-items: center; border-bottom: 1px solid #aaa; }
.status > * { flex: none; }
.fill { width: 78px; display: grid; grid-template: 8.500px 8.500px / 50px 28px; font-size: 8px; line-height: 8.500px; padding-left: 1px; letter-spacing: -.3px; }
.fill i { background: #1c1c1c; height: 8px; width: 27px; }
.op { width: 12px; padding-left: 3px; font-size: 8px; letter-spacing: -.3px; }
.opacity, .zoom { height: 14px; border: 1px solid #b5b2ad; border-radius: 3px; background: #fff; display: flex; align-items: center; color: #333; font-size: 8px; }
.opacity { width: 23px; } .opacity span { flex: 1; padding-left: 2px; }
.eye { width: 10px; height: 10px; margin-left: 3.500px; }
.layer { width: 58px; height: 16px; margin-left: 2px; border: 1px solid #a19f9b; border-radius: 3px; background: linear-gradient(#d5d3d1, #bebcb9); display: flex; align-items: center; padding-left: 3px; font-size: 8px; font-weight: 600; }
.msg { width: 349px; padding-left: 5px; white-space: nowrap; letter-spacing: -.3px; }
.coords { width: 46px; display: flex; flex-direction: column; font: 7.500px/8.500px "DejaVu Sans Mono"; letter-spacing: -.05px; }
.zl { width: 11px; font-size: 8px; }
.zoom { width: 34px; } .zoom span { flex: 1; text-align: center; }
```
